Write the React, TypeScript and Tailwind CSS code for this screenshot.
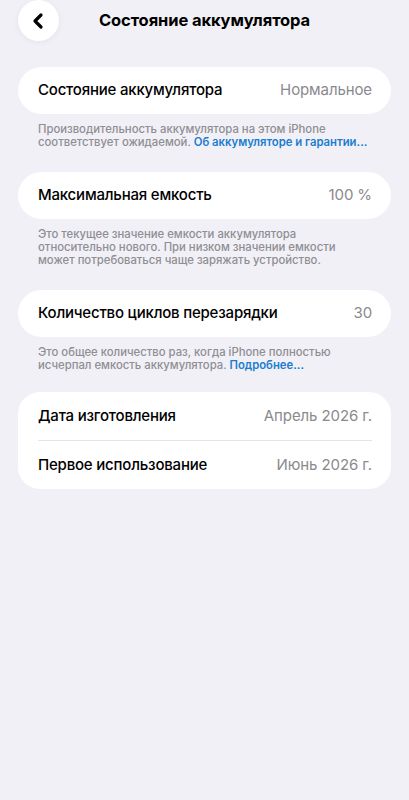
import { ChevronLeft } from "lucide-react";

const rows = [
  {
    label: "Состояние аккумулятора",
    value: "Нормальное",
    note: (
      <>
        Производительность аккумулятора на этом iPhone соответствует ожидаемой.{" "}
        <span className="font-semibold text-[#1b7ccf]">Об аккумуляторе и гарантии...</span>
      </>
    ),
  },
  {
    label: "Максимальная емкость",
    value: "100 %",
    note: (
      <>
        Это текущее значение емкости аккумулятора относительно нового. При низком значении емкости
        может потребоваться чаще заряжать устройство.
      </>
    ),
  },
  {
    label: "Количество циклов перезарядки",
    value: "30",
    note: (
      <>
        Это общее количество раз, когда iPhone полностью исчерпал емкость аккумулятора.{" "}
        <span className="font-semibold text-[#1b7ccf]">Подробнее...</span>
      </>
    ),
  },
];

export default function App() {
  return (
    <div
      className="min-h-[800px] w-[409px] bg-[#f1f0f6] text-black"
      style={{ fontFamily: "Inter, 'Noto Sans', sans-serif" }}
    >
      {/* Header */}
      <div className="relative flex h-[41px] items-center justify-center">
        <button className="absolute left-[18px] top-0 flex h-[41px] w-[41px] items-center justify-center rounded-full bg-white shadow-[0_1px_6px_rgba(0,0,0,0.06)]">
          <ChevronLeft size={24} strokeWidth={3.2} className="-ml-[2px] text-black" />
        </button>
        <h1 className="text-[16.5px] font-bold tracking-[-0.1px]">Состояние аккумулятора</h1>
      </div>

      <div className="flex flex-col gap-[23px] px-[18px] pt-[26px]">
        {rows.map((row, i) => (
          <div key={i}>
            <div className="flex h-[47px] items-center justify-between rounded-[24px] bg-white pl-[20px] pr-[19px]">
              <span className="text-[15px] font-medium tracking-[-0.2px]">{row.label}</span>
              <span className="text-[15px] tracking-[-0.1px] text-[#8a8a8e]">{row.value}</span>
            </div>
            <p className="pl-[20px] pr-[16px] pt-[9px] text-[11.3px] font-medium leading-[13px] text-[#8e8e93]">
              {row.note}
            </p>
          </div>
        ))}

        <div className="-mt-[3px] rounded-[22px] bg-white pl-[20px] pr-[19px]">
          <div className="flex h-[49px] items-center justify-between border-b border-[#e4e4e8]">
            <span className="text-[15px] font-medium tracking-[-0.2px]">Дата изготовления</span>
            <span className="text-[15px] tracking-[-0.1px] text-[#8a8a8e]">Апрель 2026 г.</span>
          </div>
          <div className="flex h-[48px] items-center justify-between">
            <span className="text-[15px] font-medium tracking-[-0.2px]">Первое использование</span>
            <span className="text-[15px] tracking-[-0.1px] text-[#8a8a8e]">Июнь 2026 г.</span>
          </div>
        </div>
      </div>
    </div>
  );
}
